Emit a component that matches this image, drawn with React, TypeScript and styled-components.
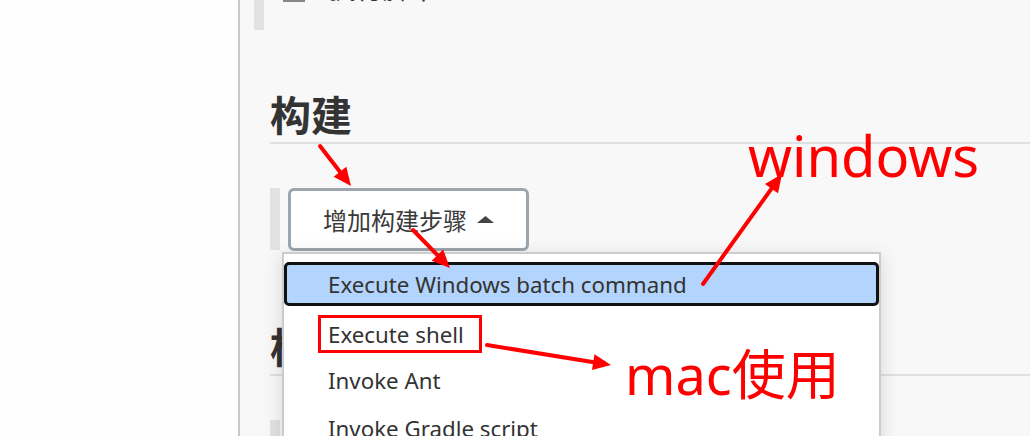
import React from "react";
import styled, { createGlobalStyle } from "styled-components";

const GlobalStyle = createGlobalStyle`
  html, body { margin: 0; padding: 0; background: #fefefe; }
  body { font-family: "Noto Sans", "Noto Sans CJK SC", sans-serif; }
`;

const Page = styled.div`
  width: 1030px;
  height: 436px;
  display: flex;
  overflow: hidden;
`;

const Sidebar = styled.aside`
  width: 238px;
  flex: none;
  background: #fefefe;
  border-right: 2px solid #c8c8c8;
`;

const Main = styled.main`
  position: relative;
  flex: 1;
  background: #f8f8f8;
  overflow: hidden;
`;

const PrevChunk = styled.div`
  display: flex;
  height: 30px;
  margin-left: 14px;
  overflow: hidden;
`;

const Handle = styled.div<{ $h: number }>`
  width: 10px;
  height: ${(p) => p.$h}px;
  flex: none;
  background: #e2e2e2;
`;

const PrevRow = styled.div`
  display: flex;
  align-items: flex-end;
  gap: 24px;
  margin-left: 19px;
  margin-top: -27px;
  height: 29px;
  font-family: "Noto Sans CJK SC", sans-serif;
  font-size: 27px;
  line-height: 29px;
  color: #333;
`;

const Section = styled.section<{ $top: number }>`
  margin-left: 30px;
  margin-top: ${(p) => p.$top}px;
`;

const Heading = styled.h2`
  margin: 0;
  height: 38px;
  padding-bottom: 10px;
  border-bottom: 2px solid #e0e0e0;
  font-family: "Noto Sans CJK SC", sans-serif;
  font-size: 41px;
  font-weight: 700;
  line-height: 38px;
  color: #333;
  white-space: nowrap;
`;

const StepRow = styled.div`
  display: flex;
  gap: 8px;
  margin-top: 44px;
`;

const AddButton = styled.button`
  width: 241px;
  height: 63px;
  box-sizing: border-box;
  border: 3px solid #9ba6af;
  border-radius: 6px;
  background: #fff;
  display: flex;
  align-items: center;
  justify-content: center;
  gap: 10px;
  padding: 0;
  font-family: "Noto Sans CJK SC", sans-serif;
  font-size: 24px;
  color: #3a3a3a;
`;

const Dropdown = styled.ul`
  position: absolute;
  left: 42px;
  top: 252px;
  width: 599px;
  height: 220px;
  box-sizing: border-box;
  margin: 0;
  padding: 8px 0 0;
  list-style: none;
  display: flex;
  flex-direction: column;
  gap: 4px;
  background: #fff;
  border: 2px solid #cccccc;
  box-shadow: 0 4px 18px rgba(0, 0, 0, 0.14);
`;

const Item = styled.li<{ $active?: boolean }>`
  height: 44px;
  flex: none;
  box-sizing: border-box;
  display: flex;
  align-items: center;
  padding-left: ${(p) => (p.$active ? 41 : 44)}px;
  border: ${(p) => (p.$active ? "3px solid #111" : "none")};
  border-radius: 5px;
  background: ${(p) => (p.$active ? "#b3d4fc" : "transparent")};
  font-family: "Noto Sans", sans-serif;
  font-size: 22.3px;
  color: #333;
  white-space: nowrap;
`;

const Boxed = styled.span`
  display: inline-flex;
  align-items: center;
  height: 38px;
  box-sizing: border-box;
  margin-left: -10px;
  margin-top: 4px;
  padding: 0 15px 0 7px;
  border: 3px solid #ff0000;
`;

const Note = styled.div<{ $left: number; $top: number; $size: number }>`
  position: absolute;
  left: ${(p) => p.$left}px;
  top: ${(p) => p.$top}px;
  font-family: "Noto Sans", "Noto Sans CJK SC", sans-serif;
  font-size: ${(p) => p.$size}px;
  line-height: 1;
  color: #ff0000;
  white-space: nowrap;
  pointer-events: none;
`;

const Overlay = styled.svg`
  position: absolute;
  left: 0;
  top: 0;
  pointer-events: none;
`;

type Arrow = [number, number, number, number];

const arrows: Arrow[] = [
  [320, 146, 351, 186],
  [413, 230, 450, 268],
  [703, 284, 782, 174],
  [487, 345, 611, 365],
];

function head(a: Arrow) {
  const [x1, y1, x2, y2] = a;
  const dx = x2 - x1;
  const dy = y2 - y1;
  const l = Math.hypot(dx, dy);
  const ux = dx / l;
  const uy = dy / l;
  const len = 18;
  const hw = 8;
  const bx = x2 - ux * len;
  const by = y2 - uy * len;
  return {
    line: [x1, y1, x2 - ux * 8, y2 - uy * 8],
    pts: `${x2},${y2} ${bx - uy * hw},${by + ux * hw} ${bx + uy * hw},${by - ux * hw}`,
  };
}

const Annotations = () => (
  <Overlay width={790} height={436} viewBox="240 0 790 436">
    {arrows.map((a, i) => {
      const h = head(a);
      return (
        <g key={i}>
          <line
            x1={h.line[0]}
            y1={h.line[1]}
            x2={h.line[2]}
            y2={h.line[3]}
            stroke="#ff0000"
            strokeWidth={4}
            strokeLinecap="round"
          />
          <polygon points={h.pts} fill="#ff0000" />
        </g>
      );
    })}
  </Overlay>
);

const HandleIcon = () => (
  <svg width="22" height="24" viewBox="0 0 22 24">
    <rect x="0" y="6" width="22" height="3" fill="#888" />
    <rect x="0" y="13" width="22" height="3" fill="#888" />
    <rect x="0" y="21" width="22" height="3" fill="#888" />
  </svg>
);

const Caret = () => (
  <svg width="17" height="7" viewBox="0 0 17 7">
    <polygon points="8.5,0 17,7 0,7" fill="#444" />
  </svg>
);

export default function App() {
  return (
    <>
      <GlobalStyle />
      <Page>
        <Sidebar />
        <Main>
          <PrevChunk>
            <Handle $h={30} />
            <PrevRow>
              <HandleIcon />
              <span>执行脚本</span>
            </PrevRow>
          </PrevChunk>
          <Section $top={64}>
            <Heading>构建</Heading>
            <StepRow>
              <Handle $h={62} />
              <AddButton>
                增加构建步骤
                <Caret />
              </AddButton>
            </StepRow>
          </Section>
          <Section $top={75}>
            <Heading>构建后操作</Heading>
            <StepRow>
              <Handle $h={62} />
            </StepRow>
          </Section>
          <Dropdown>
            <Item $active>Execute Windows batch command</Item>
            <Item>
              <Boxed>Execute shell</Boxed>
            </Item>
            <Item>Invoke Ant</Item>
            <Item>Invoke Gradle script</Item>
          </Dropdown>
          <Annotations />
          <Note $left={508} $top={127} $size={56}>windows</Note>
          <Note $left={385} $top={347} $size={54}>mac使用</Note>
        </Main>
      </Page>
    </>
  );
}
